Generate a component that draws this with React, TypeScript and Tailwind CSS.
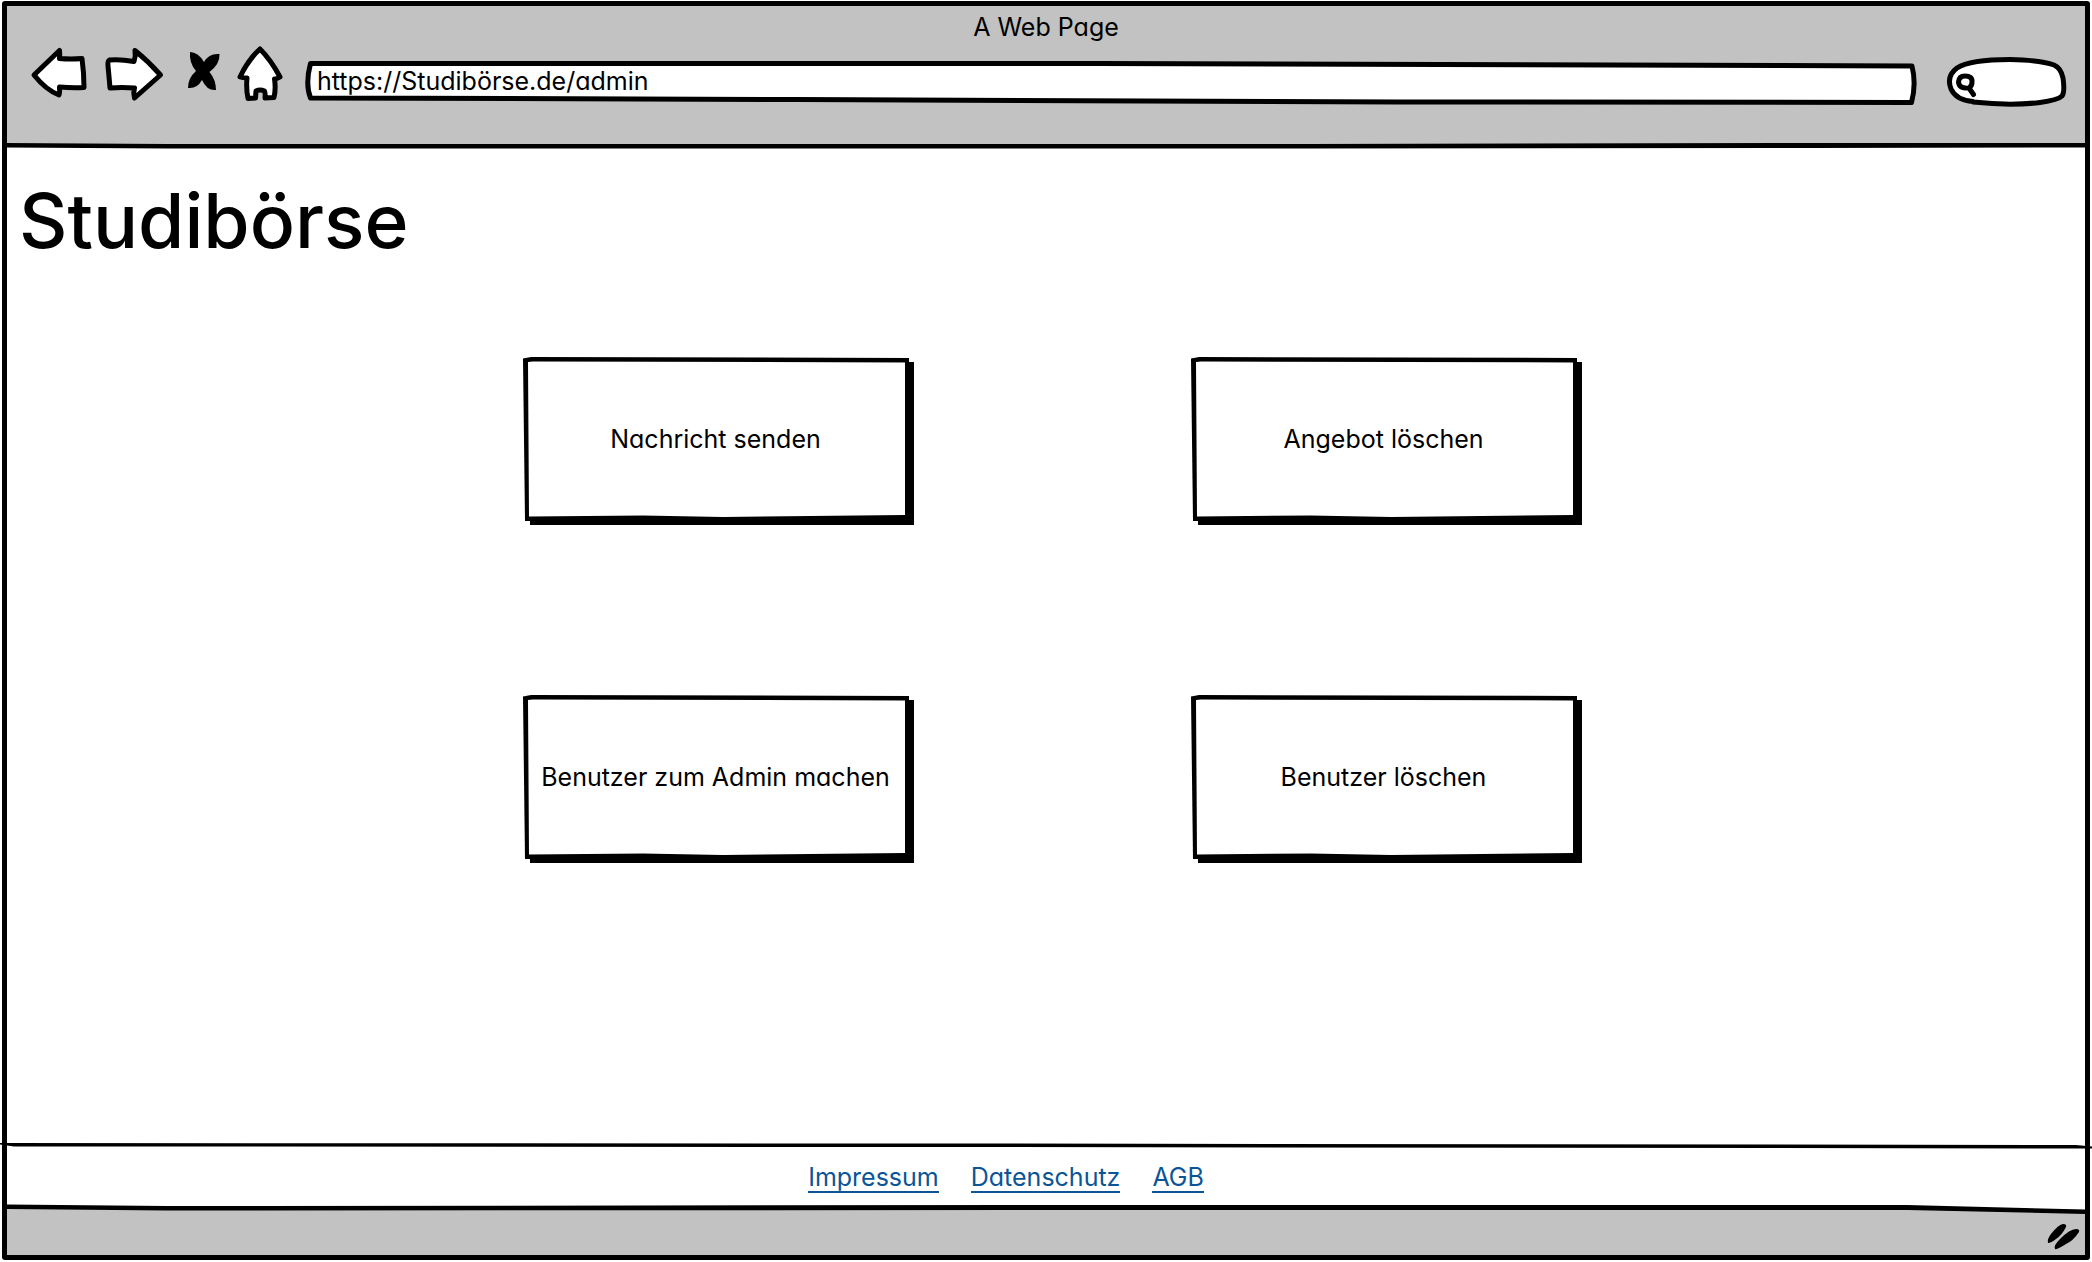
import React from "react";

const actions = [
  "Nachricht senden",
  "Angebot löschen",
  "Benutzer zum Admin machen",
  "Benutzer löschen",
];

const links = ["Impressum", "Datenschutz", "AGB"];

const ink = {
  stroke: "#000",
  strokeWidth: 5,
  strokeLinejoin: "round" as const,
  strokeLinecap: "round" as const,
};

function BackIcon() {
  return (
    <svg width="63" height="62" viewBox="27 46 63 62" fill="#fff" aria-hidden="true">
      <path {...ink} d="M34 75 L59.500 50.500 Q60 54 59.500 58.500 Q71 59.500 82 58.500 Q84 73 84 87.500 Q71 88 59.500 87 Q60 92 59 95 Q46 90 34 75Z" />
    </svg>
  );
}

function ForwardIcon() {
  return (
    <svg width="66" height="62" viewBox="102 46 66 62" fill="#fff" aria-hidden="true">
      <path {...ink} d="M109.500 60 Q120 59 134 61.500 Q136 56 135 50.500 Q148 61 160.500 75 L134.500 98 Q133 93 134.500 88 Q122 87 110 88 Q109 76 108 66 Q107.500 61 109.500 60Z" />
    </svg>
  );
}

function StopIcon() {
  return (
    <svg width="43" height="62" viewBox="180 46 43 62" aria-hidden="true">
      <path d="M190 52 Q198 52 204 62 Q209 53 219.500 54 Q220 64 209.500 72 Q216 80 216 90 Q207 91 202 80 Q197 89 188 88 Q188 78 196 71 Q189 63 190 52Z" />
    </svg>
  );
}

function HomeIcon() {
  return (
    <svg width="50" height="62" viewBox="235 46 50 62" fill="#fff" aria-hidden="true">
      <path {...ink} d="M260 49 Q271 60 280 77 Q277 79 274.500 79 Q276 89 274 97.500 L265 98 Q265.500 93 264.500 91 Q260 89 256 91 L255.500 98 L248 98.500 Q246 89 247 78 Q243 78 240 77 Q248 60 260 49Z" />
    </svg>
  );
}

function AddressBar() {
  return (
    <div className="relative ml-5 h-[62px] flex-1">
      <svg className="absolute inset-0 h-full w-full" viewBox="307 46 1611 62" preserveAspectRatio="none" fill="#fff" aria-hidden="true">
        <path {...ink} vectorEffect="non-scaling-stroke" d="M312.500 63.500 L1100 63.500 L1913 66 Q1917.500 84 1912.500 102.500 L1400 102 L800 99.500 L312.500 98 Q307 84 312.500 63.500Z" />
      </svg>
      <input
        aria-label="Adresse"
        defaultValue="https://Studibörse.de/admin"
        className="absolute inset-x-0 top-[19px] h-8 bg-transparent px-3 text-[25px] leading-8 outline-none"
      />
    </div>
  );
}

function SearchField() {
  return (
    <div className="relative ml-7 h-[62px] w-[122px]">
      <svg className="absolute inset-0" width="122" height="62" viewBox="1945 46 122 62" fill="#fff" aria-hidden="true">
        <path {...ink} d="M1973 101.500 Q1956 100 1951 89 Q1946 76 1957 68 Q1970 59.500 2010 59.500 Q2040 60 2054 65 Q2061 68 2063 78 Q2065 92 2062 96 Q2058 100 2040 102.500 Q2010 106 1973 102Z" />
        <path {...ink} fill="none" d="M1969 88 Q1959 89 1958.500 82 Q1959 76 1965 76 Q1972.500 76 1972 82 Q1972 86 1969 88 L1973.500 94.500" />
      </svg>
      <input aria-label="Suche" className="absolute inset-y-4 right-3 left-8 w-[76px] bg-transparent outline-none" />
    </div>
  );
}

function ActionCard({ label }: { label: string }) {
  return (
    <button type="button" className="relative h-[168px] w-full pr-[5px] pb-1 text-[25px] leading-8">
      <svg className="absolute inset-0 h-full w-full" viewBox="0 0 391 168" preserveAspectRatio="none" aria-hidden="true">
        <path d="M6 5 L391 5 L391 168 L260 168 L160 169 L7 168Z" />
        <path d="M0 1.500 L8 0 L386 1 L386 163 L2 164Z" />
        <path fill="#fff" d="M5 5 L10 4.500 L382 5.500 L382 158 L200 160 L120 158.500 L6 159.500Z" />
      </svg>
      <span className="relative">{label}</span>
    </button>
  );
}

export default function App() {
  return (
    <div className="min-h-screen bg-white pt-px pr-0.5 pb-0.5 pl-0.5 font-['Inter','Liberation_Sans',sans-serif] text-black [font-feature-settings:'cv11']">
      <div className="flex min-h-[calc(100vh-3px)] flex-col rounded-[3px] border-[5px] border-black">
        <header className="bg-[#c2c2c2]">
          <div className="h-10 text-center text-[25px] leading-[42px]">A Web Page</div>
          <div className="flex items-start pr-[18px] pb-[34px] pl-5">
            <nav aria-label="Browser" className="flex gap-3">
              <button type="button" aria-label="Zurück"><BackIcon /></button>
              <button type="button" aria-label="Vorwärts"><ForwardIcon /></button>
              <button type="button" aria-label="Abbrechen"><StopIcon /></button>
              <button type="button" aria-label="Startseite"><HomeIcon /></button>
            </nav>
            <AddressBar />
            <SearchField />
          </div>
        </header>
        <svg className="block h-2 w-full shrink-0" viewBox="0 0 2078 8" preserveAspectRatio="none" aria-hidden="true">
          <path fill="#c2c2c2" d="M0 0H2078V4H0Z" />
          <path d="M0 1 L160 2 L1300 2 L1800 1 L2078 1 L2078 5.500 L1800 6 L1300 6.500 L160 6.500 L0 5.500Z" />
        </svg>

        <main className="flex-1 pt-[31px]">
          <h1 className="pl-3 text-[75px] leading-[80px] font-medium">Studibörse</h1>
          <div className="mt-24 grid grid-cols-[391px_391px] justify-center gap-x-[277px] gap-y-[170px] pl-3">
            {actions.map((label) => (
              <ActionCard key={label} label={label} />
            ))}
          </div>
        </main>

        <footer>
          <svg className="-mx-[7px] block h-2 w-[calc(100%+14px)]" viewBox="0 0 2092 8" preserveAspectRatio="none" aria-hidden="true">
            <path d="M0 2 L1000 2.500 L2076 4 L2092 5.500 L2092 7.500 L2070 7.500 L1000 6 L14 5.500 L0 3.500Z" />
          </svg>
          <nav aria-label="Rechtliches" className="flex h-[55px] items-start justify-center gap-8 pt-3.5 pr-20 text-[25px] leading-7 text-[#0b5596]">
            {links.map((link) => (
              <a key={link} href="#" className="border-b-2 border-[#0b5596]">
                {link}
              </a>
            ))}
          </nav>
          <svg className="block h-3 w-full" viewBox="0 0 2078 12" preserveAspectRatio="none" aria-hidden="true">
            <path fill="#c2c2c2" d="M0 4 L1900 4 L2078 9 L2078 12 L0 12Z" />
            <path d="M0 0.500 L160 2 L1100 1 L1900 1 L2078 5.500 L2078 10 L1900 6 L1100 6 L160 6.500 L0 5Z" />
          </svg>
          <div className="flex h-[39px] justify-end bg-[#c2c2c2] pr-1">
            <svg width="34" height="39" viewBox="2048 1216 34 39" aria-hidden="true">
              <path d="M2049 1243 Q2048 1239 2052 1234 Q2060 1224 2064 1224 Q2068 1224 2067 1227 Q2063 1235 2057 1239 Q2052 1243 2049 1243Z" />
              <path d="M2056 1249 Q2054 1246 2061 1239 Q2071 1229 2077 1229 Q2081 1229 2080 1232 Q2074 1241 2067 1244 Q2058 1250 2056 1249Z" />
            </svg>
          </div>
        </footer>
      </div>
    </div>
  );
}
